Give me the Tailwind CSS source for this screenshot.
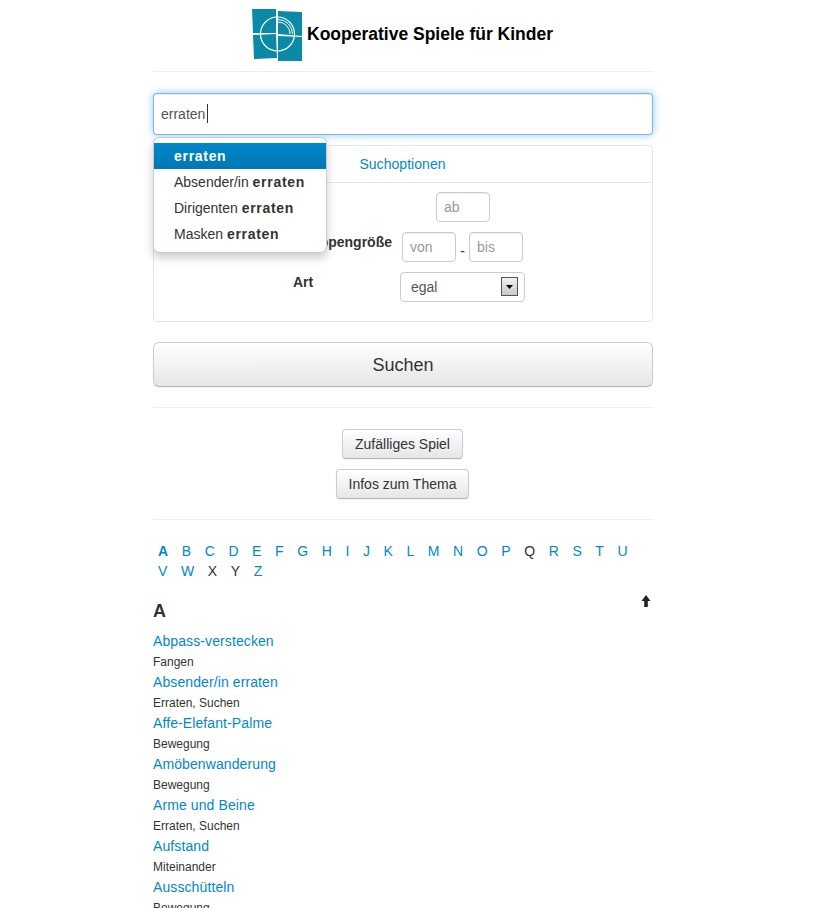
<!DOCTYPE html>
<html lang="de">
<head>
  <meta charset="UTF-8">
  <title>Kooperative Spiele für Kinder</title>
  <script src="https://cdn.jsdelivr.net/npm/@tailwindcss/browser@4"></script>
</head>
<body class="bg-white h-[908px] overflow-hidden font-['Liberation_Sans',Arial,sans-serif] text-[14px] leading-[20px] text-[#333]">
  <div class="w-[500px] ml-[153px]">

    <!-- header -->
    <header class="h-[72px] border-b border-[#eee] flex items-start pl-[98px] pt-[8px]">
      <svg width="52" height="54" viewBox="0 0 52 54" class="mr-[4px]">
        <g fill="#0a8aa6">
          <polygon points="1,1 25,1 25,25 2,25"/>
          <polygon points="27,3 51,4 51,28 27,26"/>
          <polygon points="2,27 25,26 26,50 3,51"/>
          <polygon points="27,28 51,29 51,53 27,53"/>
        </g>
        <g fill="none" stroke="#fff">
          <circle cx="26.500" cy="26" r="17" stroke-width="1.200"/>
          <path d="M27 11.500a14.500 14.500 0 0 1 14.500 14.500M27 14a12 12 0 0 1 12 12" stroke-width="1"/>
        </g>
      </svg>
      <h1 class="text-[17.5px] font-bold text-black leading-[20px] mt-[16px] whitespace-nowrap">Kooperative Spiele für Kinder</h1>
    </header>

    <!-- search -->
    <div class="relative mt-[21px]">
      <input type="text" value="erraten" class="w-full h-[42px] px-[7px] text-[14px] text-[#555] bg-white rounded-[4px] border border-[#52a8ec]/80 outline-none shadow-[inset_0_1px_1px_rgba(0,0,0,0.075),0_0_8px_rgba(82,168,236,0.6)]">
      <span class="absolute left-[54px] top-[11px] w-px h-[19px] bg-[#333]"></span>

      <ul class="absolute z-10 left-0 top-[44px] w-[174px] h-[116px] py-[5px] bg-white border border-black/20 rounded-[6px] shadow-[0_5px_10px_rgba(0,0,0,0.2)]">
        <li class="h-[26px] pl-[20px] leading-[26px] text-white font-bold tracking-[0.7px] bg-gradient-to-b from-[#0088cc] to-[#0077b3]">erraten</li>
        <li class="h-[26px] pl-[20px] leading-[26px]">Absender/in <b class="tracking-[0.7px]">erraten</b></li>
        <li class="h-[26px] pl-[20px] leading-[26px]">Dirigenten <b class="tracking-[0.7px]">erraten</b></li>
        <li class="h-[26px] pl-[20px] leading-[26px]">Masken <b class="tracking-[0.7px]">erraten</b></li>
      </ul>
    </div>

    <!-- options -->
    <section class="mt-[10px] h-[177px] border border-[#e5e5e5] rounded-[4px]">
      <div class="h-[37px] border-b border-[#e5e5e5] text-center leading-[37px] text-[#0088cc] tracking-[0.05px] pr-[1px]">Suchoptionen</div>
      <div class="pt-[9px] flex flex-col gap-[10px]">
        <div class="h-[30px] flex">
          <label class="w-[151px] ml-[131px] font-bold">Alter</label>
          <input placeholder="ab" class="w-[54px] h-[30px] px-[7px] border border-[#ccc] rounded-[4px] placeholder:text-[#999] shadow-[inset_0_1px_1px_rgba(0,0,0,0.075)]">
        </div>
        <div class="h-[30px] flex">
          <label class="w-[95px] ml-[143px] mr-[10px] font-bold whitespace-nowrap flex justify-end">Gruppengröße</label>
          <input placeholder="von" class="w-[54px] h-[30px] px-[7px] border border-[#ccc] rounded-[4px] placeholder:text-[#999] shadow-[inset_0_1px_1px_rgba(0,0,0,0.075)]">
          <span class="w-[13px] text-center pt-[9px]">-</span>
          <input placeholder="bis" class="w-[54px] h-[30px] px-[7px] border border-[#ccc] rounded-[4px] placeholder:text-[#999] shadow-[inset_0_1px_1px_rgba(0,0,0,0.075)]">
        </div>
        <div class="h-[30px] flex">
          <label class="w-[107px] ml-[139px] font-bold">Art</label>
          <div class="relative">
            <select class="appearance-none w-[125px] h-[30px] pl-[10px] text-[#555] bg-white border border-[#ccc] rounded-[4px]">
              <option>egal</option>
            </select>
            <span class="absolute right-[7px] top-[5px] w-[17px] h-[19px] border border-[#555] bg-gradient-to-b from-[#f2f2f2] to-[#c8c8c8] flex items-center justify-center">
              <svg width="7" height="4" viewBox="0 0 7 4"><path d="M0 0h7L3.500 4z" fill="#000"/></svg>
            </span>
          </div>
        </div>
      </div>
    </section>

    <!-- actions -->
    <button class="block mt-[20px] w-full h-[45px] text-[18px] text-[#333] rounded-[6px] border border-[#ccc] border-b-[#b3b3b3] bg-gradient-to-b from-white to-[#e6e6e6] shadow-[0_1px_2px_rgba(0,0,0,0.05)]">Suchen</button>
    <hr class="mt-[20px] border-[#eee]">
    <div class="mt-[21px] pr-[1px] flex flex-col items-center gap-[10px]">
      <button class="w-[121px] h-[30px] text-[#333] rounded-[4px] border border-[#ccc] border-b-[#b3b3b3] bg-gradient-to-b from-white to-[#e6e6e6] shadow-[0_1px_2px_rgba(0,0,0,0.05)]">Zufälliges Spiel</button>
      <button class="w-[133px] h-[30px] text-[#333] rounded-[4px] border border-[#ccc] border-b-[#b3b3b3] bg-gradient-to-b from-white to-[#e6e6e6] shadow-[0_1px_2px_rgba(0,0,0,0.05)]">Infos zum Thema</button>
    </div>
    <hr class="mt-[20px] border-[#eee]">

    <!-- alphabet -->
    <nav class="mt-[21px] flex flex-wrap gap-x-[3.600px] text-[#0088cc]">
      <a class="px-[5px] font-bold">A</a><a class="px-[5px]">B</a><a class="px-[5px]">C</a><a class="px-[5px]">D</a><a class="px-[5px]">E</a><a class="px-[5px]">F</a><a class="px-[5px]">G</a><a class="px-[5px]">H</a><a class="px-[5px]">I</a><a class="px-[5px]">J</a><a class="px-[5px]">K</a><a class="px-[5px]">L</a><a class="px-[5px]">M</a><a class="px-[5px]">N</a><a class="px-[5px]">O</a><a class="px-[5px]">P</a><a class="px-[5px] text-[#333]">Q</a><a class="px-[5px]">R</a><a class="px-[5px]">S</a><a class="px-[5px]">T</a><a class="px-[5px]">U</a>
      <div class="basis-full h-0"></div>
      <a class="px-[5px]">V</a><a class="px-[5px]">W</a><a class="px-[5px] text-[#333]">X</a><a class="px-[5px] text-[#333]">Y</a><a class="px-[5px]">Z</a>
    </nav>

    <!-- games -->
    <div class="mt-[10px] flex justify-between items-start">
      <h2 class="text-[18px] font-bold leading-[20px] mt-[10px]">A</h2>
      <svg width="10" height="12" viewBox="0 0 10 12" class="mr-[2px] mt-[4px]"><path d="M5 0l4.500 6H6.800v6H3.200V6H.5z" fill="#222"/></svg>
    </div>
    <ul class="mt-[10px]">
      <li class="h-[41px]"><a class="block text-[#0088cc] leading-[20px] tracking-[0.1px]">Abpass-verstecken</a><p class="text-[12px] leading-[22px]">Fangen</p></li>
      <li class="h-[41px]"><a class="block text-[#0088cc] leading-[20px] tracking-[0.1px]">Absender/in erraten</a><p class="text-[12px] leading-[22px]">Erraten, Suchen</p></li>
      <li class="h-[41px]"><a class="block text-[#0088cc] leading-[20px] tracking-[0.1px]">Affe-Elefant-Palme</a><p class="text-[12px] leading-[22px]">Bewegung</p></li>
      <li class="h-[41px]"><a class="block text-[#0088cc] leading-[20px] tracking-[0.1px]">Amöbenwanderung</a><p class="text-[12px] leading-[22px]">Bewegung</p></li>
      <li class="h-[41px]"><a class="block text-[#0088cc] leading-[20px] tracking-[0.1px]">Arme und Beine</a><p class="text-[12px] leading-[22px]">Erraten, Suchen</p></li>
      <li class="h-[41px]"><a class="block text-[#0088cc] leading-[20px] tracking-[0.1px]">Aufstand</a><p class="text-[12px] leading-[22px]">Miteinander</p></li>
      <li class="h-[41px]"><a class="block text-[#0088cc] leading-[20px] tracking-[0.1px]">Ausschütteln</a><p class="text-[12px] leading-[22px]">Bewegung</p></li>
    </ul>
  </div>
</body>
</html>
